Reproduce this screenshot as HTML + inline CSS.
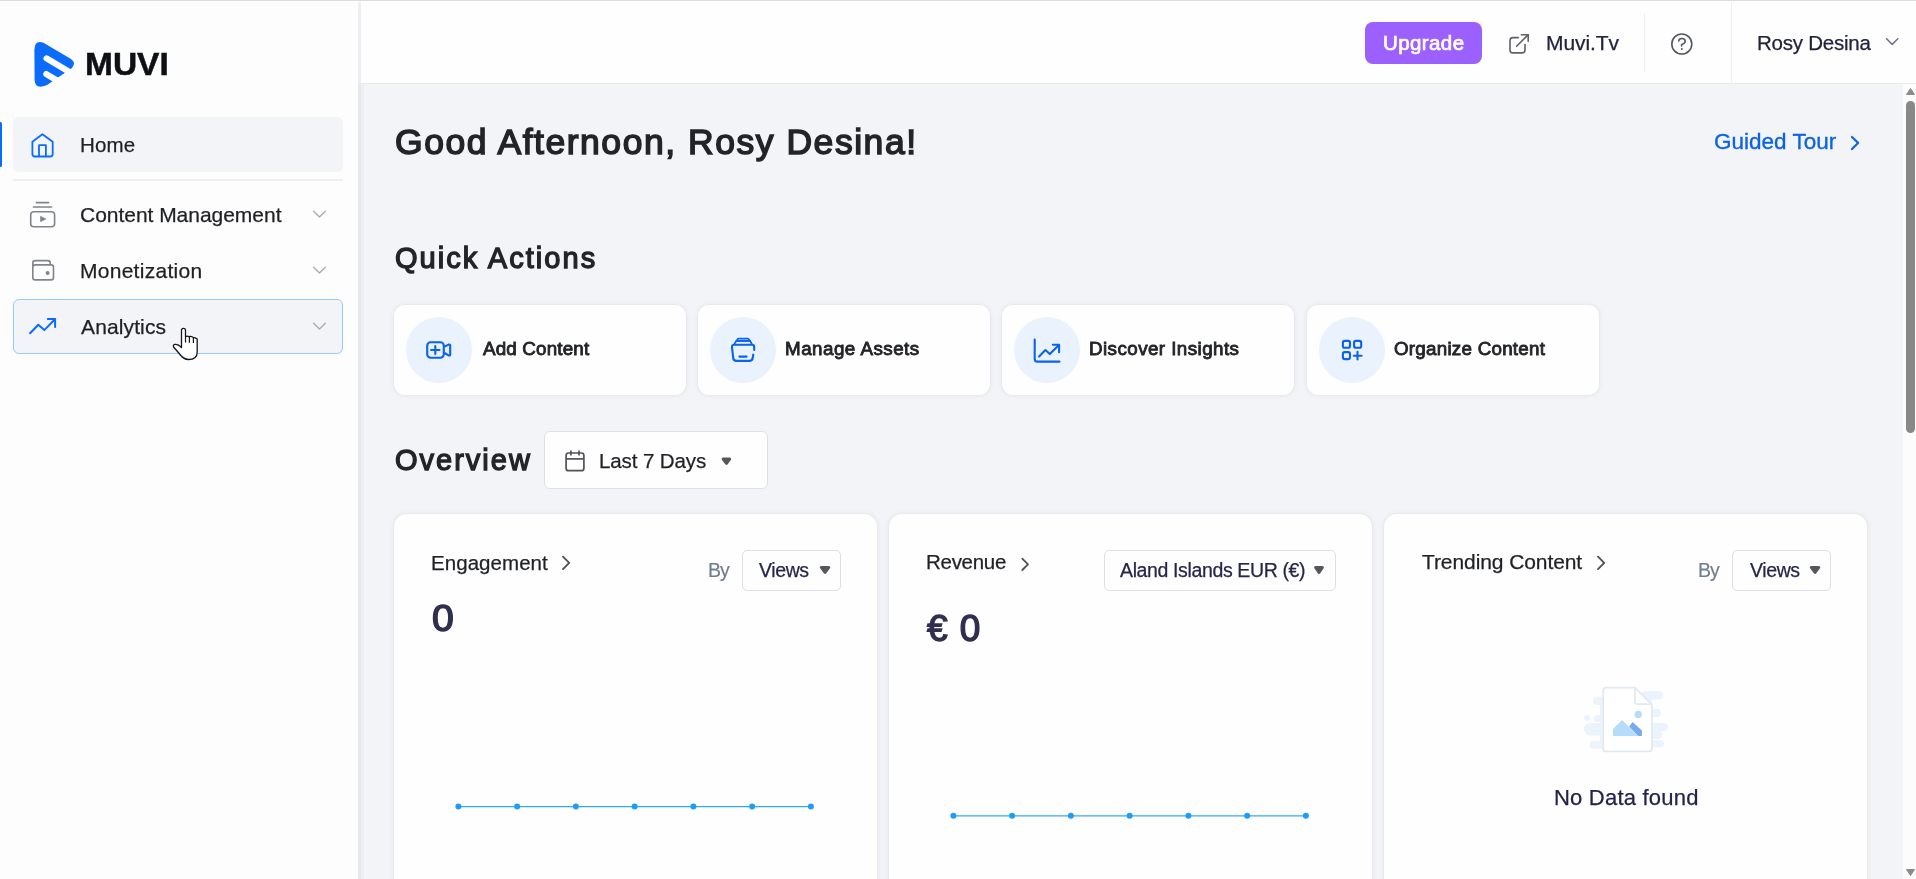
<!DOCTYPE html>
<html><head><meta charset="utf-8"><title>Muvi</title>
<style>
html,body{margin:0;padding:0;width:1916px;height:879px;overflow:hidden;background:#f3f4f8;}
body{position:relative;font-family:"Liberation Sans",sans-serif;}
.t{position:absolute;white-space:nowrap;will-change:transform;}
.b{position:absolute;display:block;}
</style></head><body>
<div class="b" style="left:0px;top:0px;width:1916px;height:879px;background:#f3f4f8"></div>
<div class="b" style="left:0px;top:0px;width:358px;height:879px;background:#fdfdfd"></div>
<div class="b" style="left:358px;top:3px;width:6px;height:876px;background:linear-gradient(90deg,#e8e9ed 0,#e8e9ed 3px,#eeeff3 3px,#eeeff3 6px)"></div>
<div class="b" style="left:358px;top:3px;width:3px;height:80px;background:#eceef1"></div>
<div class="b" style="left:361px;top:0px;width:1555px;height:83px;background:#fefefe"></div>
<div class="b" style="left:361px;top:83px;width:1555px;height:1px;background:#e9ebef"></div>
<div class="b" style="left:0px;top:0px;width:1916px;height:1px;background:#dcdedd"></div>
<div class="b" style="left:1903px;top:84px;width:13px;height:795px;background:#fcfcfc"></div>
<div class="b" style="left:1906px;top:101px;width:9px;height:332px;background:#878887;border-radius:4.5px"></div>
<svg class="b" style="left:1903px;top:84px;" width="13" height="14" viewBox="0 0 13 14"><path d="M3.5 10.5 L7.5 4.5 L11.5 10.5 Z" fill="#8a8b8a" stroke="#8a8b8a" stroke-width="1" stroke-linejoin="round"/></svg>
<svg class="b" style="left:1903px;top:865px;" width="13" height="14" viewBox="0 0 13 14"><path d="M3.5 4.5 L11.5 4.5 L7.5 10.5 Z" fill="#8a8b8a" stroke="#8a8b8a" stroke-width="1" stroke-linejoin="round"/></svg>
<svg class="b" style="left:30px;top:38px;" width="48" height="52" viewBox="0 0 48 52"><path d="M4.4 12 Q4.4 2 13 4.6 L41 21 Q46.5 24.5 42 30 L17 47 Q5 52 4.6 42 Z" fill="#0b6cfc"/>
<line x1="16.6" y1="20.4" x2="50" y2="40.4" stroke="#fdfdfd" stroke-width="6.2" stroke-linecap="round"/>
<line x1="16.3" y1="36.1" x2="50" y2="56.1" stroke="#fdfdfd" stroke-width="6.2" stroke-linecap="round"/></svg>
<div class="t" style="left:85.12px;top:44.85px;letter-spacing:0.000px;color:#0d1116;font-size:31px;line-height:40px;font-weight:700;-webkit-text-stroke:0.5px #0d1116;transform:scaleX(1.08);transform-origin:0 0;">MUVI</div>
<div class="b" style="left:0px;top:122px;width:2px;height:45px;background:#0b6cfc;border-radius:0 1.5px 1.5px 0"></div>
<div class="b" style="left:13px;top:117px;width:330px;height:55px;background:#f3f4f8;border-radius:6px"></div>
<div class="b" style="left:13px;top:179px;width:330px;height:2px;background:#eef0f3"></div>
<svg class="b" style="left:24px;top:128px;" width="40" height="36" viewBox="0 0 40 36"><path d="M8.4 26 L8.4 13.8 L18.4 6.2 L28.7 13.8 L28.7 26 Q28.7 28.5 26.2 28.5 L10.9 28.5 Q8.4 28.5 8.4 26 Z" fill="none" stroke="#0b6cfc" stroke-width="1.8" stroke-linejoin="round"/>
<path d="M15 28.5 L15 17.2 L21.9 17.2 L21.9 28.5" fill="none" stroke="#0b6cfc" stroke-width="1.8" stroke-linejoin="round"/></svg>
<div class="t" style="left:79.50px;top:130.75px;letter-spacing:0.167px;color:#1f2023;font-size:20.5px;line-height:27px;-webkit-text-stroke:0.25px #1f2023;">Home</div>
<svg class="b" style="left:24px;top:196px;" width="40" height="36" viewBox="0 0 40 36"><line x1="12.3" y1="6.6" x2="24.7" y2="6.6" stroke="#80858c" stroke-width="1.6" stroke-linecap="round"/>
<line x1="9.4" y1="11" x2="27.6" y2="11" stroke="#80858c" stroke-width="1.6" stroke-linecap="round"/>
<rect x="6.7" y="15.8" width="23.9" height="15" rx="3" fill="none" stroke="#80858c" stroke-width="1.6"/>
<path d="M16.6 20.4 L21.8 23 L16.6 25.6 Z" fill="#80858c" stroke="#80858c" stroke-width="0.8" stroke-linejoin="round"/></svg>
<div class="t" style="left:79.50px;top:201.25px;letter-spacing:-0.029px;color:#1f2023;font-size:21px;line-height:27px;-webkit-text-stroke:0.25px #1f2023;">Content Management</div>
<svg class="b" style="left:24px;top:252px;" width="40" height="36" viewBox="0 0 40 36"><path d="M8.8 14 L8.8 11 Q8.8 8.6 11.3 8.6 L23.7 8.6 Q26.2 8.6 26.2 11 L26.2 12.9" fill="none" stroke="#80858c" stroke-width="1.6"/>
<rect x="8.8" y="12.9" width="20.7" height="15" rx="2.5" fill="none" stroke="#80858c" stroke-width="1.6"/>
<circle cx="23.6" cy="20.9" r="2" fill="#80858c"/></svg>
<div class="t" style="left:79.50px;top:256.75px;letter-spacing:0.273px;color:#1f2023;font-size:21px;line-height:27px;-webkit-text-stroke:0.25px #1f2023;">Monetization</div>
<div class="b" style="left:13px;top:299px;width:330px;height:55px;background:#f3f4f8;border:1px solid #93cdfa;border-radius:6px;box-sizing:border-box"></div>
<svg class="b" style="left:24px;top:308px;" width="40" height="36" viewBox="0 0 40 36"><polyline points="6.1,25.2 14.3,16.8 20.3,22.1 30.7,11.5" fill="none" stroke="#0b6cfc" stroke-width="2" stroke-linejoin="round" stroke-linecap="round"/>
<polyline points="23.8,11.1 31.1,11.1 31.1,18.9" fill="none" stroke="#0b6cfc" stroke-width="2" stroke-linejoin="round" stroke-linecap="round"/></svg>
<div class="t" style="left:80.50px;top:312.75px;letter-spacing:0.125px;color:#1f2023;font-size:21px;line-height:27px;-webkit-text-stroke:0.25px #1f2023;">Analytics</div>
<svg class="b" style="left:300px;top:205px;" width="40" height="16" viewBox="0 0 40 16"><polyline points="13.65,6.30 19.45,12.10 25.4,6.30" fill="none" stroke="#a9adb3" stroke-width="1.4" stroke-linecap="round" stroke-linejoin="round"/></svg>
<svg class="b" style="left:300px;top:261px;" width="40" height="16" viewBox="0 0 40 16"><polyline points="13.65,6.30 19.45,12.10 25.4,6.30" fill="none" stroke="#a9adb3" stroke-width="1.4" stroke-linecap="round" stroke-linejoin="round"/></svg>
<svg class="b" style="left:300px;top:317px;" width="40" height="16" viewBox="0 0 40 16"><polyline points="13.65,6.30 19.45,12.10 25.4,6.30" fill="none" stroke="#a9adb3" stroke-width="1.4" stroke-linecap="round" stroke-linejoin="round"/></svg>
<svg class="b" style="left:164px;top:318px;" width="40" height="44" viewBox="0 0 40 44"><path d="M17.5 29.5 L17.5 12.5 Q17.5 10.4 19.5 10.4 Q21.5 10.4 21.5 12.5 L21.5 18.6 Q23 17.7 25 18.6 Q27 17.9 29 19.3 Q31 19.2 33.2 21 L33.2 34 Q33.2 41.5 24.5 41.5 Q19.5 41.5 15.2 35.5 L9.6 29 Q8.6 27 11 26.4 Q14 25.8 17.5 29.5 Z" fill="#fff" stroke="#15161c" stroke-width="1.3" stroke-linejoin="round"/>
<line x1="21.5" y1="18.6" x2="21.5" y2="24.5" stroke="#15161c" stroke-width="1.2"/>
<line x1="25.4" y1="18.8" x2="25.4" y2="24.8" stroke="#15161c" stroke-width="1.2"/>
<line x1="29.4" y1="19.6" x2="29.4" y2="25" stroke="#15161c" stroke-width="1.2"/></svg>
<div class="b" style="left:1365px;top:22px;width:117px;height:42px;background:#9b60fd;border-radius:8px"></div>
<div class="t" style="left:1382.60px;top:29.25px;letter-spacing:0.400px;color:#ffffff;font-size:20.5px;line-height:27px;-webkit-text-stroke:0.7px #ffffff;">Upgrade</div>
<svg class="b" style="left:1500px;top:24px;" width="40" height="40" viewBox="0 0 40 40"><path d="M18.2 13.65 L13 13.65 Q10 13.65 10 16.65 L10 25.9 Q10 28.9 13 28.9 L22 28.9 Q25 28.9 25 25.9 L25 20.5" fill="none" stroke="#5d6067" stroke-width="1.6" stroke-linecap="round"/>
<polyline points="21.4,10.7 28.2,10.7 28.2,17.3" fill="none" stroke="#5d6067" stroke-width="1.6" stroke-linecap="round" stroke-linejoin="round"/>
<line x1="16.6" y1="22.3" x2="28" y2="10.9" stroke="#5d6067" stroke-width="1.6" stroke-linecap="round"/></svg>
<div class="t" style="left:1545.50px;top:28.55px;letter-spacing:-0.083px;color:#23233d;font-size:21px;line-height:27px;-webkit-text-stroke:0.25px #23233d;">Muvi.Tv</div>
<div class="b" style="left:1644px;top:13px;width:1px;height:59px;background:#eef0f2"></div>
<svg class="b" style="left:1662px;top:24px;" width="40" height="40" viewBox="0 0 40 40"><circle cx="19.8" cy="20" r="10" fill="none" stroke="#55585d" stroke-width="1.6"/>
<path d="M16.7 17 Q17 14.5 19.9 14.5 Q23.2 14.5 23.2 17.3 Q23.2 19.3 19.6 20.7 L19.6 22" fill="none" stroke="#55585d" stroke-width="1.6" stroke-linecap="round"/>
<circle cx="19.8" cy="24.9" r="1" fill="#55585d"/></svg>
<div class="b" style="left:1731px;top:3px;width:1px;height:80px;background:#eef0f2"></div>
<div class="t" style="left:1757.30px;top:28.55px;letter-spacing:-0.240px;color:#22223d;font-size:20.5px;line-height:27px;-webkit-text-stroke:0.25px #22223d;">Rosy Desina</div>
<svg class="b" style="left:1880px;top:32px;" width="24" height="20" viewBox="0 0 24 20"><polyline points="6.6,6.8 12.2,12.5 17.8,6.8" fill="none" stroke="#6b7080" stroke-width="1.5" stroke-linecap="round" stroke-linejoin="round"/></svg>
<div class="t" style="left:394.50px;top:118.56px;letter-spacing:1.537px;color:#222428;font-size:35.5px;line-height:46px;-webkit-text-stroke:1.5px #222428;">Good Afternoon, Rosy Desina!</div>
<div class="t" style="left:1714.30px;top:126.55px;letter-spacing:0.000px;color:#0d63e0;font-size:22.5px;line-height:29px;-webkit-text-stroke:0.35px #0d63e0;">Guided Tour</div>
<svg class="b" style="left:1840px;top:125px;" width="30" height="35" viewBox="0 0 30 35"><polyline points="12,12 18.1,17.9 12,24.1" fill="none" stroke="#0f66de" stroke-width="2.2" stroke-linecap="round" stroke-linejoin="round"/></svg>
<div class="t" style="left:395.30px;top:239.17px;letter-spacing:2.042px;color:#222428;font-size:29px;line-height:38px;-webkit-text-stroke:1.3px #222428;">Quick Actions</div>
<div class="b" style="left:394px;top:305px;width:292px;height:90px;background:#fefefe;border-radius:11px;box-shadow:0 0 0 1px #e9eaee,0 0 5px 1px rgba(20,30,60,0.05)"></div>
<div class="b" style="left:406px;top:317px;width:66px;height:66px;background:#e9f2fd;border-radius:50%"></div>
<div class="t" style="left:483.00px;top:337.02px;letter-spacing:0.170px;color:#222428;font-size:18.8px;line-height:24px;-webkit-text-stroke:0.85px #222428;">Add Content</div>
<div class="b" style="left:698px;top:305px;width:292px;height:90px;background:#fefefe;border-radius:11px;box-shadow:0 0 0 1px #e9eaee,0 0 5px 1px rgba(20,30,60,0.05)"></div>
<div class="b" style="left:710px;top:317px;width:66px;height:66px;background:#e9f2fd;border-radius:50%"></div>
<div class="t" style="left:785.00px;top:337.02px;letter-spacing:0.483px;color:#222428;font-size:18.8px;line-height:24px;-webkit-text-stroke:0.85px #222428;">Manage Assets</div>
<div class="b" style="left:1002px;top:305px;width:292px;height:90px;background:#fefefe;border-radius:11px;box-shadow:0 0 0 1px #e9eaee,0 0 5px 1px rgba(20,30,60,0.05)"></div>
<div class="b" style="left:1014px;top:317px;width:66px;height:66px;background:#e9f2fd;border-radius:50%"></div>
<div class="t" style="left:1089.00px;top:337.02px;letter-spacing:0.438px;color:#222428;font-size:18.8px;line-height:24px;-webkit-text-stroke:0.85px #222428;">Discover Insights</div>
<div class="b" style="left:1307px;top:305px;width:292px;height:90px;background:#fefefe;border-radius:11px;box-shadow:0 0 0 1px #e9eaee,0 0 5px 1px rgba(20,30,60,0.05)"></div>
<div class="b" style="left:1319px;top:317px;width:66px;height:66px;background:#e9f2fd;border-radius:50%"></div>
<div class="t" style="left:1394.00px;top:337.02px;letter-spacing:0.247px;color:#222428;font-size:18.8px;line-height:24px;-webkit-text-stroke:0.85px #222428;">Organize Content</div>
<svg class="b" style="left:419px;top:330px;" width="40" height="40" viewBox="0 0 40 40"><rect x="8.2" y="12.3" width="16.6" height="15.5" rx="3.5" fill="none" stroke="#0a63e8" stroke-width="2.1"/>
<line x1="12.1" y1="20" x2="20.5" y2="20" stroke="#0a63e8" stroke-width="2.1" stroke-linecap="round"/>
<line x1="16.3" y1="16" x2="16.3" y2="24.1" stroke="#0a63e8" stroke-width="2.1" stroke-linecap="round"/>
<path d="M25.5 16.6 L29.6 14.6 Q31.2 14.2 31.2 15.8 L31.2 24.5 Q31.2 26 29.6 25.4 L25.5 23" fill="none" stroke="#0a63e8" stroke-width="2.1" stroke-linejoin="round"/></svg>
<svg class="b" style="left:723px;top:330px;" width="40" height="40" viewBox="0 0 40 40"><path d="M13.6 10.8 L14.6 9.1 Q15 8.6 15.8 8.6 L24.6 8.6 Q25.4 8.6 25.8 9.1 L26.8 10.8 Z" fill="none" stroke="#0a63e8" stroke-width="1.7" stroke-linejoin="round"/>
<path d="M10.9 14.8 L13.2 10.8 L27.2 10.8 L29.2 14.8" fill="none" stroke="#0a63e8" stroke-width="1.7" stroke-linejoin="round"/>
<path d="M31.2 20 L31.2 17 Q31.2 14.8 29 14.8 L11 14.8 Q8.8 14.8 9 17.2 L10.2 28 Q10.6 30.9 13.5 30.9 L26.4 30.9 Q29.3 30.9 29.7 28 L30.3 24.5" fill="none" stroke="#0a63e8" stroke-width="2.1" stroke-linecap="round" stroke-linejoin="round"/>
<line x1="16.4" y1="26.6" x2="23.6" y2="26.6" stroke="#0a63e8" stroke-width="2.1" stroke-linecap="round"/></svg>
<svg class="b" style="left:1027px;top:330px;" width="40" height="40" viewBox="0 0 40 40"><path d="M7.7 9.6 L7.7 29 Q7.7 31.6 10.3 31.6 L32.5 31.6" fill="none" stroke="#0a63e8" stroke-width="2.1" stroke-linecap="round"/>
<polyline points="12.1,26.4 18.4,20 22.8,24.1 31.9,15" fill="none" stroke="#0a63e8" stroke-width="2.1" stroke-linecap="round" stroke-linejoin="round"/>
<polyline points="25.9,14.8 32.1,14.8 32.1,22.3" fill="none" stroke="#0a63e8" stroke-width="2.1" stroke-linecap="round" stroke-linejoin="round"/></svg>
<svg class="b" style="left:1332px;top:330px;" width="40" height="40" viewBox="0 0 40 40"><rect x="10.9" y="10.9" width="7.1" height="6.8" rx="1.8" fill="none" stroke="#0a63e8" stroke-width="2.1"/>
<rect x="22.1" y="10.9" width="7.1" height="6.8" rx="1.8" fill="none" stroke="#0a63e8" stroke-width="2.1"/>
<rect x="10.9" y="22.1" width="7.1" height="7" rx="1.8" fill="none" stroke="#0a63e8" stroke-width="2.1"/>
<line x1="21.8" y1="25.7" x2="29.6" y2="25.7" stroke="#0a63e8" stroke-width="2.1" stroke-linecap="round"/>
<line x1="25.5" y1="21.9" x2="25.5" y2="29.5" stroke="#0a63e8" stroke-width="2.1" stroke-linecap="round"/></svg>
<div class="t" style="left:395.30px;top:441.27px;letter-spacing:2.000px;color:#222428;font-size:29px;line-height:38px;-webkit-text-stroke:1.3px #222428;">Overview</div>
<div class="b" style="left:544px;top:431px;width:224px;height:58px;background:#fefefe;border:1px solid #dcdfe6;border-radius:6px;box-sizing:border-box"></div>
<svg class="b" style="left:555px;top:440px;" width="40" height="40" viewBox="0 0 40 40"><rect x="11.1" y="13" width="17.8" height="17.7" rx="2.5" fill="none" stroke="#505256" stroke-width="1.7"/>
<line x1="11.1" y1="18.9" x2="28.9" y2="18.9" stroke="#505256" stroke-width="1.7"/>
<line x1="15.9" y1="10.4" x2="15.9" y2="15.6" stroke="#505256" stroke-width="1.7"/>
<line x1="24" y1="10.4" x2="24" y2="15.6" stroke="#505256" stroke-width="1.7"/></svg>
<div class="t" style="left:598.80px;top:446.85px;letter-spacing:-0.100px;color:#1f2125;font-size:20.5px;line-height:27px;-webkit-text-stroke:0.25px #1f2125;">Last 7 Days</div>
<svg class="b" style="left:718px;top:454px;" width="16" height="14" viewBox="0 0 16 14"><path d="M5.20 5.00 L11.70 5.00 L8.45 9.30 Z" fill="#55575b" stroke="#55575b" stroke-width="3.0" stroke-linejoin="round"/></svg>
<div class="b" style="left:394px;top:514px;width:483px;height:380px;background:#fefefe;border-radius:13px;box-shadow:0 0 0 1px #e9eaee,0 0 5px 1px rgba(20,30,60,0.05)"></div>
<div class="b" style="left:889px;top:514px;width:483px;height:380px;background:#fefefe;border-radius:13px;box-shadow:0 0 0 1px #e9eaee,0 0 5px 1px rgba(20,30,60,0.05)"></div>
<div class="b" style="left:1384px;top:514px;width:483px;height:380px;background:#fefefe;border-radius:13px;box-shadow:0 0 0 1px #e9eaee,0 0 5px 1px rgba(20,30,60,0.05)"></div>
<div class="t" style="left:430.80px;top:548.85px;letter-spacing:0.056px;color:#1f2125;font-size:20.5px;line-height:27px;-webkit-text-stroke:0.25px #1f2125;">Engagement</div>
<svg class="b" style="left:555px;top:550px;" width="20" height="20" viewBox="0 0 20 20"><polyline points="8,6.65 14.2,12.8 8,19.1" fill="none" stroke="#505257" stroke-width="1.9" stroke-linecap="round" stroke-linejoin="round"/></svg>
<div class="t" style="left:708.00px;top:558.30px;letter-spacing:-1.000px;color:#6f7c8c;font-size:19.5px;line-height:25px;-webkit-text-stroke:0.15px #6f7c8c;">By</div>
<div class="b" style="left:742px;top:550px;width:99px;height:41px;background:#fefefe;border:1px solid #dcdfe6;border-radius:5px;box-sizing:border-box"></div>
<div class="t" style="left:758.80px;top:557.76px;letter-spacing:-0.400px;color:#26264a;font-size:19.5px;line-height:25px;-webkit-text-stroke:0.25px #26264a;">Views</div>
<svg class="b" style="left:816px;top:562px;" width="17" height="14" viewBox="0 0 17 14"><path d="M5.30 5.40 L12.80 5.40 L9.05 10.30 Z" fill="#55575b" stroke="#55575b" stroke-width="3.0" stroke-linejoin="round"/></svg>
<div class="t" style="left:432.00px;top:595.36px;letter-spacing:0.000px;color:#2f2f4f;font-size:37px;line-height:48px;-webkit-text-stroke:1.4px #2f2f4f;transform:scaleX(1.06);transform-origin:0 0;">0</div>
<div class="t" style="left:926.00px;top:548.05px;letter-spacing:-0.283px;color:#1f2125;font-size:20.5px;line-height:27px;-webkit-text-stroke:0.25px #1f2125;">Revenue</div>
<svg class="b" style="left:1000px;top:545px;" width="40" height="40" viewBox="0 0 40 40"><polyline points="22.3,13.65 28,19.35 22.3,25" fill="none" stroke="#505257" stroke-width="1.8" stroke-linecap="round" stroke-linejoin="round"/></svg>
<div class="b" style="left:1104px;top:550px;width:232px;height:41px;background:#fefefe;border:1px solid #dcdfe6;border-radius:5px;box-sizing:border-box"></div>
<div class="t" style="left:1120.00px;top:557.76px;letter-spacing:-0.370px;color:#26264a;font-size:19.5px;line-height:25px;-webkit-text-stroke:0.25px #26264a;">Aland Islands EUR (€)</div>
<svg class="b" style="left:1311px;top:562px;" width="16" height="15" viewBox="0 0 16 15"><path d="M4.60 5.40 L11.40 5.40 L8.00 10.40 Z" fill="#55575b" stroke="#55575b" stroke-width="3.0" stroke-linejoin="round"/></svg>
<div class="t" style="left:927.40px;top:604.56px;letter-spacing:1.000px;color:#2f2f4f;font-size:37px;line-height:48px;-webkit-text-stroke:1.4px #2f2f4f;">€ 0</div>
<div class="t" style="left:1421.50px;top:548.35px;letter-spacing:-0.087px;color:#1f2125;font-size:21px;line-height:27px;-webkit-text-stroke:0.25px #1f2125;">Trending Content</div>
<svg class="b" style="left:1590px;top:550px;" width="20" height="20" viewBox="0 0 20 20"><polyline points="8,6.65 14.2,12.8 8,19.1" fill="none" stroke="#505257" stroke-width="1.9" stroke-linecap="round" stroke-linejoin="round"/></svg>
<div class="t" style="left:1698.00px;top:558.30px;letter-spacing:-1.000px;color:#6f7c8c;font-size:19.5px;line-height:25px;-webkit-text-stroke:0.15px #6f7c8c;">By</div>
<div class="b" style="left:1732px;top:550px;width:99px;height:41px;background:#fefefe;border:1px solid #dcdfe6;border-radius:5px;box-sizing:border-box"></div>
<div class="t" style="left:1749.80px;top:557.76px;letter-spacing:-0.400px;color:#26264a;font-size:19.5px;line-height:25px;-webkit-text-stroke:0.25px #26264a;">Views</div>
<svg class="b" style="left:1806px;top:562px;" width="17" height="14" viewBox="0 0 17 14"><path d="M5.30 5.40 L12.80 5.40 L9.05 10.30 Z" fill="#55575b" stroke="#55575b" stroke-width="3.0" stroke-linejoin="round"/></svg>
<svg class="b" style="left:0px;top:0px;pointer-events:none" width="1916" height="879" viewBox="0 0 1916 879"><line x1="458.4" y1="806.6" x2="810.9" y2="806.6" stroke="#36a8f8" stroke-width="1.3"/><circle cx="458.40" cy="806.6" r="3" fill="#1d9dfb"/><circle cx="517.15" cy="806.6" r="3" fill="#1d9dfb"/><circle cx="575.90" cy="806.6" r="3" fill="#1d9dfb"/><circle cx="634.65" cy="806.6" r="3" fill="#1d9dfb"/><circle cx="693.40" cy="806.6" r="3" fill="#1d9dfb"/><circle cx="752.15" cy="806.6" r="3" fill="#1d9dfb"/><circle cx="810.90" cy="806.6" r="3" fill="#1d9dfb"/></svg>
<svg class="b" style="left:0px;top:0px;pointer-events:none" width="1916" height="879" viewBox="0 0 1916 879"><line x1="953.4" y1="815.8" x2="1305.9" y2="815.8" stroke="#36a8f8" stroke-width="1.3"/><circle cx="953.40" cy="815.8" r="3" fill="#1d9dfb"/><circle cx="1012.15" cy="815.8" r="3" fill="#1d9dfb"/><circle cx="1070.90" cy="815.8" r="3" fill="#1d9dfb"/><circle cx="1129.65" cy="815.8" r="3" fill="#1d9dfb"/><circle cx="1188.40" cy="815.8" r="3" fill="#1d9dfb"/><circle cx="1247.15" cy="815.8" r="3" fill="#1d9dfb"/><circle cx="1305.90" cy="815.8" r="3" fill="#1d9dfb"/></svg>
<svg class="b" style="left:1575px;top:680px;" width="100" height="80" viewBox="0 0 100 80"><g fill="#ebf3fd">
<rect x="18" y="16.8" width="14" height="8.2" rx="4.1"/>
<circle cx="12" cy="38" r="3"/>
<rect x="18.5" y="35" width="12" height="7" rx="3.5"/>
<rect x="9" y="43" width="22" height="12.5" rx="6.2"/>
<rect x="14.5" y="61" width="17" height="7.7" rx="3.8"/>
<rect x="72" y="11" width="16" height="8.6" rx="4.3"/>
<rect x="72" y="29" width="14" height="8" rx="4"/>
<rect x="72" y="43" width="21" height="8" rx="4"/>
<rect x="76" y="51" width="11" height="8" rx="4"/>
<rect x="72" y="60" width="17" height="7.5" rx="3.7"/>
<rect x="70" y="12" width="7" height="55"/>
<rect x="25" y="18" width="5" height="50"/>
<rect x="66" y="11" width="10" height="8.6" rx="4.3"/>
</g>
<path d="M31.2 7.7 L60 7.7 L76.9 24.6 L76.9 68.4 Q76.9 71.4 73.9 71.4 L31.2 71.4 Q28.2 71.4 28.2 68.4 L28.2 10.7 Q28.2 7.7 31.2 7.7 Z" fill="#fff" stroke="#e2e9f1" stroke-width="1.8" stroke-linejoin="round"/>
<path d="M60 7.7 L60 21.8 Q60 24.2 62.4 24.2 L76.9 24.2" fill="none" stroke="#e2e9f1" stroke-width="1.8" stroke-linejoin="round"/>
<circle cx="63.2" cy="34.4" r="3.6" fill="#b5dcfb"/>
<path d="M54.1 46.4 L57.6 42 L66.9 50.5 L66.9 56 L63.2 56 Z" fill="#78aaee"/>
<path d="M38 49.1 L47.1 40 L63.2 56 L38 56 Z" fill="#b5dcfb"/></svg>
<div class="t" style="left:1553.50px;top:782.55px;letter-spacing:0.208px;color:#23234a;font-size:22px;line-height:29px;-webkit-text-stroke:0.25px #23234a;">No Data found</div>
</body></html>
